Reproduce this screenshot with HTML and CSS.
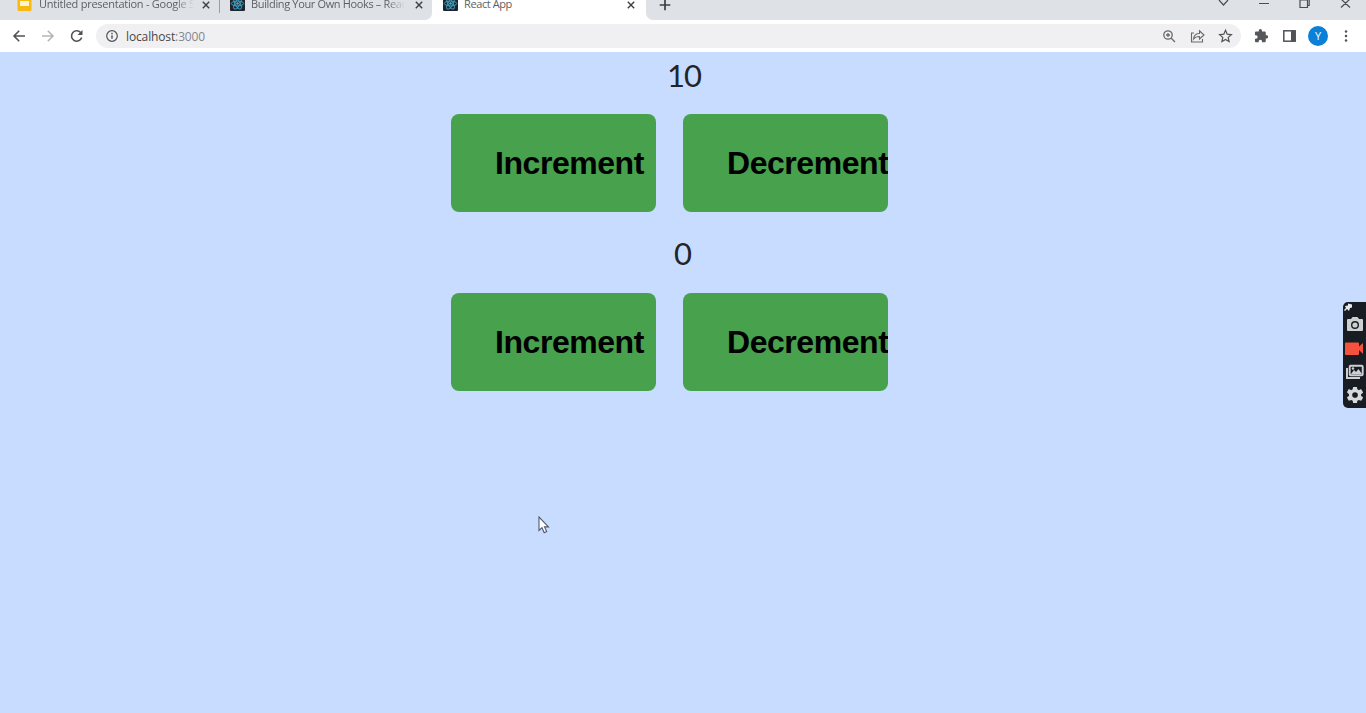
FILE: index.html
```html
<!DOCTYPE html>
<html lang="en">
<head>
<meta charset="utf-8">
<title>React App</title>
<link rel="stylesheet" href="styles.css">
</head>
<body>
<svg class="defs" width="0" height="0">
  <symbol id="react" viewBox="0 0 15 15">
    <rect width="15" height="15" rx="1" fill="#20252d"/>
    <g fill="none" stroke="#3f9fc0" stroke-width=".95"><ellipse cx="7.5" cy="7.5" rx="6.2" ry="2.4"/><ellipse cx="7.5" cy="7.5" rx="6.2" ry="2.4" transform="rotate(60 7.5 7.5)"/><ellipse cx="7.5" cy="7.5" rx="6.2" ry="2.4" transform="rotate(120 7.5 7.5)"/></g>
    <circle cx="7.5" cy="7.5" r="1.2" fill="#4db5d8"/>
  </symbol>
  <symbol id="close" viewBox="0 0 8 8"><path d="M.8.8l6.400 6.400M7.200.8L.8 7.200" stroke="#3c4043" stroke-width="1.400"/></symbol>
</svg>
<header class="tabs">
  <div class="tab tab-slides">
    <svg class="fav" viewBox="0 0 15 15"><rect x=".5" width="14" height="15" rx="1.5" fill="#f8b912"/><rect x="3" y="5" width="9" height="5" fill="#fff4d0"/></svg>
    <span class="title title-fade">Untitled presentation - Google Sl</span>
    <svg class="close"><use href="#close"/></svg>
  </div>
  <div class="tab tab-docs">
    <svg class="fav"><use href="#react"/></svg>
    <span class="title title-fade">Building Your Own Hooks – React</span>
    <svg class="close"><use href="#close"/></svg>
  </div>
  <div class="tab tab-active">
    <svg class="fav"><use href="#react"/></svg>
    <span class="title">React App</span>
    <svg class="close"><use href="#close"/></svg>
  </div>
  <div class="strip-rest">
    <svg class="plus" viewBox="0 0 12 12"><path d="M6 .7v10.600M.7 6h10.600" stroke="#3c4043" stroke-width="1.700"/></svg>
    <svg class="window-controls" width="136" height="12" viewBox="0 0 136 12" fill="none" stroke="#4b4d51" stroke-width="1.200">
      <path d="M3 0l4.500 5 4.500-5M43 3.500h10M84 0h7.500v7.500H84zM91.500 5.500h1.700V0M125 -1l9 8.500M134 -1l-9 8.500"/>
    </svg>
  </div>
</header>
<nav class="toolbar">
  <svg class="nav-icons" width="72" height="16" viewBox="0 0 72 16" fill="none" stroke-width="1.600">
    <path d="M13 8H2M7.200 2.800L2 8l5.200 5.200" stroke="#505256"/>
    <path d="M30 8h11M35.800 2.800L41 8l-5.200 5.200" stroke="#b5b6b9"/>
    <path d="M69 5A5.200 5.200 0 1 0 69.700 9.500" stroke="#505256"/><path d="M70.500 2v5h-5z" fill="#505256"/>
  </svg>
  <div class="address">
    <svg width="12" height="12" viewBox="0 0 12 12" fill="none" stroke="#505256"><circle cx="6" cy="6" r="5.300" stroke-width="1.200"/><path d="M6 5.300v3.500M6 2.800v1.400" stroke-width="1.400"/></svg>
    <span class="url">localhost<span class="port">:3000</span></span>
    <svg class="address-icons" width="72" height="16" viewBox="0 0 72 16" fill="none" stroke="#66686c" stroke-width="1.300">
      <circle cx="6" cy="7" r="4.200"/><path d="M9 10l4 4M4 7h4M6 5v4"/>
      <path d="M32 5h-2.500v9h11v-3M31.500 11c.5-4 3-5.500 6-5.500V2.800l4.500 4.200-4.500 4V8.500c-2.500 0-4.500.5-6 2.500z" stroke-width="1.100"/>
      <path d="M63.500 2.300l1.700 3.900 4.200.4-3.200 2.800.9 4.200-3.600-2.200-3.600 2.200.9-4.200-3.200-2.800 4.200-.4z" stroke="#505256" stroke-width="1.200"/>
    </svg>
  </div>
  <svg class="extensions" width="14" height="14" viewBox="1 1 21 22"><path fill="#55575b" d="M20.500 11H19V7c0-1.100-.9-2-2-2h-4V3.500a2.500 2.500 0 0 0-5 0V5H4c-1.100 0-2 .9-2 2v3.800h1.500a2.700 2.700 0 0 1 0 5.400H2V20c0 1.100.9 2 2 2h3.800v-1.500a2.700 2.700 0 0 1 5.400 0V22H17c1.100 0 2-.9 2-2v-4h1.500a2.500 2.500 0 0 0 0-5z"/></svg>
  <svg class="panel" width="13" height="12" viewBox="0 0 13 12"><rect x=".8" y=".8" width="11.400" height="10.400" fill="none" stroke="#505256" stroke-width="1.500"/><path fill="#505256" d="M8 1h4.500v10H8z"/></svg>
  <span class="avatar">Y</span>
  <svg class="more" width="4" height="12" viewBox="0 0 4 12" fill="#505256"><circle cx="2" cy="1.600" r="1.250"/><circle cx="2" cy="6" r="1.250"/><circle cx="2" cy="10.400" r="1.250"/></svg>
</nav>
<main class="page">
  <section class="counter">
    <div class="count count-ten">10</div>
    <div class="actions"><button class="btn">Increment</button><button class="btn">Decrement</button></div>
  </section>
  <section class="counter">
    <div class="count">0</div>
    <div class="actions actions-second"><button class="btn">Increment</button><button class="btn">Decrement</button></div>
  </section>
</main>
<svg class="recorder" width="23" height="106" viewBox="0 0 23 106">
  <rect width="30" height="106" rx="5" fill="#181d24"/>
  <path d="M5 1.500l4 1v3l-2 .5-1 3-2-2-2 2-1-1 2-2-1-2 3-.5z" fill="#e8eaec"/>
  <g fill="#cfd0d1">
    <path d="M5 17h3l1.500-2h5l1.500 2h3q1 0 1 1v10q0 1-1 1H5q-1 0-1-1V18q0-1 1-1z"/>
    <circle cx="12" cy="23" r="4" fill="#181d24"/><circle cx="12" cy="23" r="2.600"/>
  </g>
  <path d="M3 40.500h12q1 0 1 1v3l4-3.500v11L16 48v4q0 1-1 1H3q-1 0-1-1V41.500q0-1 1-1z" fill="#f4513f"/>
  <path d="M4 66v10h13" fill="none" stroke="#cfd0d1" stroke-width="2"/>
  <rect x="6.700" y="63.700" width="13" height="9.600" rx="1" fill="none" stroke="#cfd0d1" stroke-width="1.900"/>
  <path d="M8 72l3-4 2 2 2.500-3 3.500 5z" fill="#cfd0d1"/><circle cx="10" cy="66.500" r="1.200" fill="#cfd0d1"/>
  <path fill="#d8d9da" fill-rule="evenodd" transform="translate(2.300 83.300) scale(.81)" d="M19.400 13a7.500 7.500 0 0 0 0-2l2.100-1.600.5-.6-2.300-4-.8.200-2.400 1a7.500 7.500 0 0 0-1.700-1L14.400 2H9.600l-.4 3a7.500 7.500 0 0 0-1.700 1L4.300 4.700l-2.300 4L4.600 11a7.500 7.500 0 0 0 0 2L2 15.200l2.300 4L7.500 18a7.500 7.500 0 0 0 1.700 1l.4 3h4.800l.4-3a7.500 7.500 0 0 0 1.700-1l3.200 1.200 2.300-4zM12 15.500a3.500 3.500 0 1 1 0-7 3.500 3.500 0 0 1 0 7z"/>
</svg>
<svg class="cursor" width="12" height="18" viewBox="0 0 12 18"><path d="M1 1v13.500l3-2.800 2.200 5 2.500-1.200-2.200-4.600h4z" fill="#fff" stroke="#4d5870" stroke-width="1.100"/></svg>
</body>
</html>
```
FILE: styles.css
```css
* { box-sizing: border-box; }
body { margin: 0; height: 713px; overflow: hidden; display: flex; flex-direction: column; background: #c8dcff; font-family: "Open Sans", "Noto Sans", sans-serif; position: relative; }
svg { display: block; flex: none; }
.defs { position: absolute; }

.tabs { display: flex; height: 20px; overflow: hidden; background: #fff; }
.tab { display: flex; align-items: flex-start; height: 20px; background: #dee1e6; }
.tab-slides { width: 220px; padding-left: 17px; background: linear-gradient(#9b9ea3, #9b9ea3) right top / 1px 13px no-repeat #dee1e6; }
.tab-docs { width: 212px; padding-left: 10px; border-bottom-right-radius: 7px; }
.tab-active { width: 214px; padding-left: 11px; background: #fff; }
.fav { width: 15px; height: 15px; margin-top: -4px; }
.title { flex: none; height: 18px; margin: -5px 0 0 6px; line-height: 18px; font-size: 11px; letter-spacing: -.4px; color: #5c5f64; white-space: nowrap; overflow: hidden; }
.tab-slides .title { width: 155px; margin-left: 7px; letter-spacing: -.25px; }
.tab-docs .title { width: 154px; letter-spacing: -.35px; }
.tab-active .title { width: 155px; }
.title-fade { mask-image: linear-gradient(to right, #000 88%, transparent); }
.close { width: 8px; height: 8px; margin: 1px 0 0 8px; }
.tab-docs .close { margin-left: 10px; }
.tab-active .close { margin-left: 8px; }
.strip-rest { flex: 1; display: flex; justify-content: space-between; padding: 0 14px 0 13px; background: #dee1e6; border-bottom-left-radius: 7px; }
.plus { width: 12px; height: 12px; margin-top: -1px; }

.toolbar { display: flex; align-items: center; height: 32px; padding: 0 18px 0 12px; background: #fff; }
.address { display: flex; align-items: center; width: 1145px; height: 24px; margin-left: 12px; padding: 0 7px 0 10px; border-radius: 12px; background: #f0f0f2; }
.url { margin-left: 8px; font-size: 12px; letter-spacing: -.13px; color: #45484c; }
.port { color: #85878b; }
.address-icons { margin-left: auto; }
.extensions { margin-left: 13px; }
.panel { margin-left: 15px; }
.avatar { display: grid; place-items: center; width: 20px; height: 20px; margin-left: 12px; border-radius: 50%; background: #0b80d8; color: #fff; font-size: 11px; line-height: 20px; }
.more { margin-left: 16px; }

.page { flex: 1; padding: 4px 0 0; }
.counter { height: 178px; }
.count { height: 38px; line-height: 38px; text-align: center; font-family: Lato, sans-serif; font-size: 31px; color: #212529; }
.count-ten { padding-left: 2px; letter-spacing: -1px; }
.actions { display: flex; gap: 27px; margin: 20px 0 0 451px; }
.actions-second { margin-top: 21px; }
.btn { width: 205px; height: 98px; padding: 0 0 0 44px; border: 0; border-radius: 8px; background: #48a14d; color: #000; font: bold 32px "Liberation Sans", Arial, sans-serif; letter-spacing: -.45px; text-align: left; overflow: hidden; white-space: nowrap; }

.recorder { position: absolute; right: 0; top: 302px; }
.cursor { position: absolute; left: 538px; top: 516px; }
```
